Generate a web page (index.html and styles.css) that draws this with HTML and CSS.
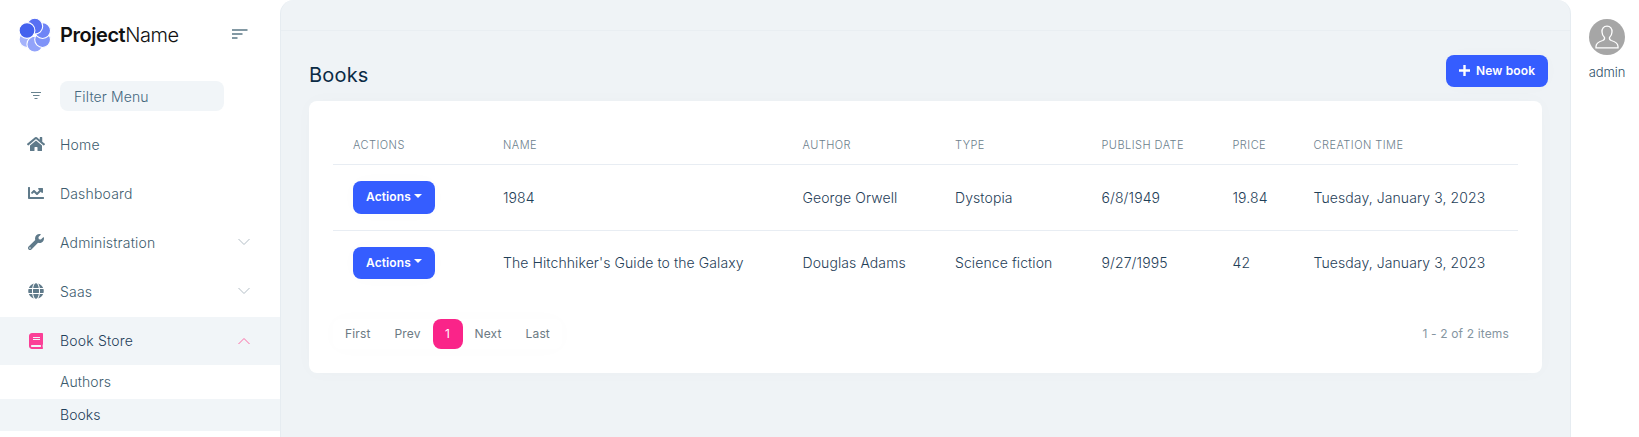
FILE: index.html
```html
<!DOCTYPE html>
<html lang="en">
<head>
<meta charset="utf-8">
<title>Books</title>
<link rel="stylesheet" href="styles.css">
</head>
<body>
<div class="app">
  <aside class="sidebar">
    <div class="brand">
      <svg class="brand-logo" viewBox="0 0 32 34">
        <g stroke="#fff" stroke-width="1.100">
          <circle cx="8" cy="21.600" r="7.900" fill="#a5b3fb"/>
          <circle cx="15.800" cy="26.200" r="7.900" fill="#92a3fa"/>
          <circle cx="23.600" cy="21.600" r="7.900" fill="#7f93f8"/>
          <circle cx="23.600" cy="12.600" r="7.900" fill="#6e84f6"/>
          <circle cx="15.800" cy="8.200" r="7.900" fill="#5870f3"/>
          <circle cx="8" cy="12.500" r="7.900" fill="#4361ee"/>
        </g>
      </svg>
      <span class="brand-name"><b>Project</b>Name</span>
      <svg class="brand-toggle" viewBox="0 0 16 10"><path d="M0 1h15.500M0 5h10.500M0 9h5.500" stroke="#5b7886" stroke-width="1.600"/></svg>
    </div>
    <div class="filter">
      <svg class="filter-icon" viewBox="0 0 10 8"><path d="M0 1.500h10M2 4.500h6.500M3.500 7.500h3" stroke="#68838f" stroke-width="1"/></svg>
      <div class="filter-box">Filter Menu</div>
    </div>
    <nav class="menu">
      <a class="item"><svg class="icon" viewBox="0 0 576 512"><path d="M280.37 148.26L96 300.11V464a16 16 0 0 0 16 16l112.060-.29a16 16 0 0 0 15.920-16V368a16 16 0 0 1 16-16h64a16 16 0 0 1 16 16v95.640a16 16 0 0 0 16 16.050L464 480a16 16 0 0 0 16-16V300L295.670 148.260a12.190 12.190 0 0 0-15.300 0zM571.600 251.470L488 182.560V44.050a12 12 0 0 0-12-12h-56a12 12 0 0 0-12 12v72.610L318.470 43a48 48 0 0 0-61 0L4.340 251.470a12 12 0 0 0-1.600 16.900l25.500 31A12 12 0 0 0 45.150 301l235.220-193.740a12.190 12.190 0 0 1 15.300 0L530.900 301a12 12 0 0 0 16.900-1.600l25.500-31a12 12 0 0 0-1.700-16.930z"/></svg><span>Home</span></a>
      <a class="item"><svg class="icon" viewBox="0 0 512 512"><path d="M496 384H64V80c0-8.840-7.160-16-16-16H16C7.160 64 0 71.160 0 80v336c0 17.670 14.330 32 32 32h464c8.840 0 16-7.160 16-16v-32c0-8.840-7.160-16-16-16zM464 96H345.940c-21.380 0-32.090 25.850-16.970 40.970l32.400 32.400L288 242.750l-73.370-73.370c-12.500-12.500-32.760-12.500-45.250 0l-68.690 68.690c-6.250 6.250-6.250 16.380 0 22.630l22.620 22.620c6.250 6.250 16.380 6.250 22.630 0L192 237.250l73.370 73.370c12.500 12.500 32.760 12.500 45.250 0l96-96 32.400 32.400c15.120 15.120 40.970 4.410 40.970-16.970V112c.01-8.840-7.150-16-15.990-16z"/></svg><span>Dashboard</span></a>
      <a class="item"><svg class="icon" viewBox="0 0 512 512"><path d="M507.730 109.100c-2.240-9.030-13.540-12.090-20.120-5.510l-74.360 74.360-67.880-11.310-11.310-67.880 74.360-74.360c6.620-6.620 3.430-17.900-5.660-20.160-47.380-11.740-99.550.91-136.580 37.930-39.640 39.640-50.550 97.100-34.050 147.200L18.740 402.760c-24.990 24.990-24.990 65.510 0 90.500 24.990 24.990 65.510 24.990 90.500 0l213.210-213.210c50.120 16.710 107.470 5.680 147.370-34.220 37.070-37.070 49.700-89.320 37.910-136.730zM64 472c-13.250 0-24-10.750-24-24 0-13.260 10.750-24 24-24s24 10.740 24 24c0 13.250-10.750 24-24 24z"/></svg><span>Administration</span><svg class="chevron" viewBox="0 0 12 8"><path d="M.5 1l5.500 5.500L11.500 1"/></svg></a>
      <a class="item"><svg class="icon" viewBox="0 0 496 512"><path d="M336.500 160C322 70.700 287.800 8 248 8s-74 62.700-88.500 152h177zM152 256c0 22.200 1.200 43.500 3.300 64h185.300c2.100-20.500 3.300-41.800 3.300-64s-1.200-43.500-3.300-64H155.300c-2.100 20.500-3.300 41.800-3.300 64zm324.700-96c-28.600-67.900-86.500-120.400-158-141.600 24.400 33.800 41.200 84.700 50 141.600h108zM177.200 18.400C105.800 39.600 47.800 92.100 19.300 160h108c8.700-56.900 25.500-107.800 49.900-141.600zM487.400 192H372.700c2.100 21 3.300 42.500 3.300 64s-1.200 43-3.300 64h114.600c5.500-20.500 8.600-41.800 8.600-64s-3.100-43.500-8.500-64zM120 256c0-21.500 1.200-43 3.300-64H8.600C3.200 212.500 0 233.800 0 256s3.200 43.500 8.600 64h114.600c-2-21-3.200-42.500-3.200-64zm39.500 96c14.500 89.300 48.700 152 88.500 152s74-62.700 88.500-152h-177zm159.300 141.600c71.400-21.200 129.400-73.700 158-141.600h-108c-8.800 56.900-25.600 107.800-50 141.600zM19.300 352c28.600 67.900 86.500 120.400 158 141.600-24.400-33.800-41.200-84.700-50-141.600h-108z"/></svg><span>Saas</span><svg class="chevron" viewBox="0 0 12 8"><path d="M.5 1l5.500 5.500L11.500 1"/></svg></a>
      <a class="item item-open"><svg class="icon" viewBox="0 0 448 512"><path d="M448 360V24c0-13.300-10.700-24-24-24H96C43 0 0 43 0 96v320c0 53 43 96 96 96h328c13.300 0 24-10.700 24-24v-16c0-7.500-3.500-14.300-8.900-18.700-4.200-15.400-4.200-59.300 0-74.700 5.400-4.300 8.900-11.100 8.900-18.600zM128 134c0-3.300 2.700-6 6-6h212c3.300 0 6 2.700 6 6v20c0 3.300-2.700 6-6 6H134c-3.300 0-6-2.700-6-6v-20zm0 64c0-3.300 2.700-6 6-6h212c3.300 0 6 2.700 6 6v20c0 3.300-2.700 6-6 6H134c-3.300 0-6-2.700-6-6v-20zm253.400 250H96c-17.700 0-32-14.300-32-32 0-17.600 14.400-32 32-32h285.400c-1.900 17.100-1.900 46.900 0 64z"/></svg><span>Book Store</span><svg class="chevron" viewBox="0 0 12 8"><path d="M.5 7L6 1.500 11.500 7"/></svg></a>
      <a class="sub">Authors</a>
      <a class="sub sub-active">Books</a>
    </nav>
  </aside>
  <main class="content">
    <div class="topbar"></div>
    <div class="page-head">
      <h1 class="title">Books</h1>
      <button class="btn btn-new"><svg class="plus" viewBox="0 0 11 11"><path d="M5.500 0v11M0 5.500h11" stroke="#fff" stroke-width="2.400"/></svg>New book</button>
    </div>
    <section class="card">
      <table class="table">
        <colgroup><col class="c1"><col class="c2"><col class="c3"><col class="c4"><col class="c5"><col class="c6"><col></colgroup>
        <thead><tr><th>Actions</th><th>Name</th><th>Author</th><th>Type</th><th>Publish date</th><th>Price</th><th>Creation time</th></tr></thead>
        <tbody>
          <tr><td><button class="btn btn-actions">Actions<i class="caret"></i></button></td><td>1984</td><td>George Orwell</td><td>Dystopia</td><td>6/8/1949</td><td>19.84</td><td>Tuesday, January 3, 2023</td></tr>
          <tr><td><button class="btn btn-actions">Actions<i class="caret"></i></button></td><td>The Hitchhiker's Guide to the Galaxy</td><td>Douglas Adams</td><td>Science fiction</td><td>9/27/1995</td><td>42</td><td>Tuesday, January 3, 2023</td></tr>
        </tbody>
      </table>
      <div class="table-foot">
        <div class="pager"><a class="page">First</a><a class="page">Prev</a><a class="page page-current">1</a><a class="page">Next</a><a class="page">Last</a></div>
        <span class="total">1 - 2 of 2 items</span>
      </div>
    </section>
  </main>
  <aside class="userbar">
    <svg class="avatar" viewBox="0 0 36 36"><circle cx="18" cy="18" r="18" fill="#a6a6a6"/><path d="M18 7.200c-3.500 0-5.200 2.400-5 5.800.1 2.600 1 4.300 2.500 5.600.3 1.500-.2 2.300-1.800 2.900-4 1.300-6.700 2.500-6.700 6v1.300h22v-1.300c0-3.500-2.700-4.700-6.700-6-1.600-.6-2.100-1.400-1.800-2.900 1.500-1.300 2.400-3 2.500-5.600.2-3.400-1.500-5.800-5-5.800z" fill="none" stroke="#fff" stroke-width="1.300"/></svg>
    <span class="user-name">admin</span>
  </aside>
</div>
</body>
</html>
```
FILE: styles.css
```css
* { box-sizing: border-box; }
body { margin: 0; font-family: Inter, "Liberation Sans", sans-serif; font-size: 14px; color: #325168; background: #fff; overflow: hidden; }
.app { display: grid; grid-template-columns: 280px 1291px 1fr; height: 437px; }

.sidebar { overflow: hidden; }
.brand { display: flex; align-items: center; height: 70px; padding: 0 32px 0 19px; }
.brand-logo { width: 32px; height: 34px; }
.brand-name { margin-left: 9px; font-size: 20px; font-weight: 300; color: #111; letter-spacing: -0.45px; }
.brand-name b { font-weight: 600; }
.brand-toggle { width: 16px; height: 10px; margin: 0 0 2px auto; }
.filter { display: flex; align-items: center; height: 30px; margin-top: 11px; padding-left: 31px; }
.filter-icon { width: 10px; height: 8px; margin-bottom: 2px; }
.filter-box { width: 164px; height: 30px; margin-left: 19px; padding-left: 14px; line-height: 32px; border-radius: 8px; background: #f1f5f8; color: #45687e; font-weight: 300; letter-spacing: 0.12px; }
.menu { margin-top: 9px; }
.item { display: flex; align-items: center; height: 48px; margin-bottom: 1px; padding: 0 30px 0 27px; color: #3d5c6e; font-weight: 300; letter-spacing: 0.18px; }
.icon { width: 18px; height: 16px; margin-right: 15px; fill: #5f7a8a; }
.chevron { width: 12px; height: 8px; margin-left: auto; fill: none; stroke: #b2bdc5; }
.item-open { height: 48px; margin: 2px 0 0; padding-bottom: 1px; background: #f1f5f8; color: #1f405a; }
.item-open .icon { fill: #fb3f97; }
.item-open .chevron { stroke: #fb6da5; }
.sub { display: block; height: 34px; padding-left: 60px; line-height: 34px; color: #3d5c6e; font-weight: 300; letter-spacing: 0.05px; }
.sub-active { height: 32px; line-height: 32px; background: #f1f5f8; color: #1f405a; }

.content { padding: 0 28px; border: 1px solid #e6ecf1; border-width: 0 1px; border-radius: 14px 14px 0 0; background: #eff3f6; }
.topbar { height: 31px; margin: 0 -28px; border-bottom: 1px solid #e9eef2; }
.page-head { display: flex; justify-content: space-between; height: 70px; padding-top: 24px; margin-right: -6px; }
.title { margin: 7px 0 0; font-size: 20px; line-height: 26px; font-weight: 400; color: #0b2b45; letter-spacing: 0.2px; }
.btn { display: flex; align-items: center; border: 0; border-radius: 8px; background: #355dff; color: #fff; font: 600 12px Inter, sans-serif; letter-spacing: 0.1px; padding: 0 13px; box-shadow: 0 0 20px rgba(0, 30, 60, 0.015); }
.btn-new { width: 102px; height: 32px; white-space: nowrap; padding-bottom: 1px; letter-spacing: 0.15px; }
.plus { width: 11px; height: 11px; margin-right: 6px; flex: none; }
.card { height: 272px; padding: 24px; width: 1233px; border-radius: 8px; background: #fff; box-shadow: 0 0 20px rgba(0, 30, 60, 0.02); }
.table { width: 1185px; table-layout: fixed; border-collapse: collapse; }
.c1 { width: 150px; } .c2 { width: 299.5px; } .c3 { width: 152.5px; } .c4 { width: 146.500px; } .c5 { width: 131px; } .c6 { width: 81px; }
th { height: 39px; padding: 1px 0 0 20px; font-size: 11px; font-weight: 300; text-align: left; text-transform: uppercase; letter-spacing: 0.46px; color: #6b7e8c; border-bottom: 1px solid #e8edf3; }
td { height: 66px; padding: 0 0 0 20px; white-space: nowrap; font-weight: 300; color: #1f4058; letter-spacing: 0.09px; border-bottom: 1px solid #e8edf3; }
tbody tr:last-child td { height: 65px; border-bottom: 0; }
.btn-actions { width: 82px; height: 33px; padding-bottom: 1px; }
tr:last-child .btn-actions { height: 32px; }
.caret { width: 0; height: 0; margin: -2px 0 0 3px; border: 4px solid transparent; border-top-color: #fff; border-bottom: 0; }
.table-foot { display: flex; align-items: center; justify-content: space-between; height: 30px; margin-top: 24px; padding-right: 9px; font-size: 12px; color: #8595a1; }
.pager { display: flex; height: 30px; color: #6c7a83; border-radius: 8px; box-shadow: 0 0 20px rgba(0, 30, 60, 0.015); }
.page { padding: 0 12px; line-height: 30px; letter-spacing: 0.14px; }
.page-current { width: 30px; padding: 0; text-align: center; border-radius: 8px; background: #fa2489; color: #fff; }
.total { padding-bottom: 2px; letter-spacing: 0.15px; }

.userbar { display: flex; flex-direction: column; align-items: center; padding: 19px 0 0 4px; }
.avatar { width: 36px; height: 36px; }
.user-name { margin-top: 8px; font-size: 13px; line-height: 18px; font-weight: 300; color: #2f5068; letter-spacing: -0.05px; }
```
